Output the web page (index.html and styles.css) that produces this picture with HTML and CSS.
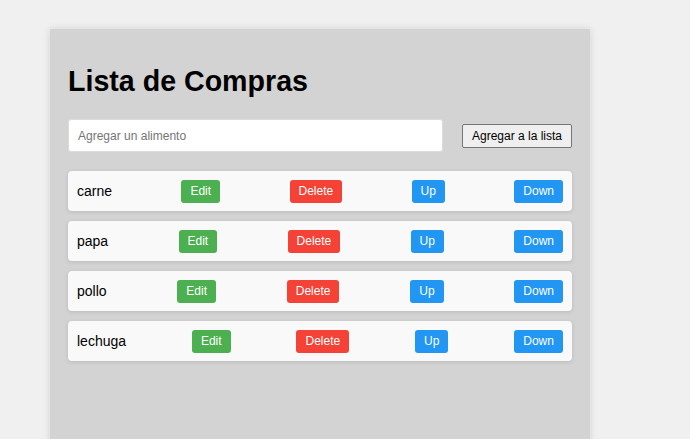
FILE: index.html
```html
<!DOCTYPE html>
<html lang="es">
<head>
<meta charset="utf-8">
<title>Lista de Compras</title>
<link rel="stylesheet" href="styles.css">
</head>
<body>
<div class="container">
  <h1 class="title">Lista de Compras</h1>
  <div class="add-row">
    <input class="add-input" type="text" placeholder="Agregar un alimento">
    <button class="add-btn">Agregar a la lista</button>
  </div>
  <ul class="list">
    <li class="item"><span class="name">carne</span><button class="btn edit">Edit</button><button class="btn delete">Delete</button><button class="btn move">Up</button><button class="btn move">Down</button></li>
    <li class="item"><span class="name">papa</span><button class="btn edit">Edit</button><button class="btn delete">Delete</button><button class="btn move">Up</button><button class="btn move">Down</button></li>
    <li class="item"><span class="name">pollo</span><button class="btn edit">Edit</button><button class="btn delete">Delete</button><button class="btn move">Up</button><button class="btn move">Down</button></li>
    <li class="item"><span class="name">lechuga</span><button class="btn edit">Edit</button><button class="btn delete">Delete</button><button class="btn move">Up</button><button class="btn move">Down</button></li>
  </ul>
</div>
</body>
</html>
```

FILE: styles.css
```css
html, body {
  margin: 0;
  padding: 0;
  background: #f0f0f0;
  font-family: "Liberation Sans", Arial, sans-serif;
  overflow: hidden;
}
body {
  padding: 29px 0 0 50px;
}
.container {
  width: 540px;
  box-sizing: border-box;
  min-height: 480px;
  background: #d3d3d3;
  padding: 35px 18px 18px 18px;
  box-shadow: 0 0 8px rgba(0, 0, 0, 0.12);
}
.title {
  margin: 0;
  font-size: 28.6px;
  line-height: 34px;
  font-weight: bold;
  color: #000;
}
.add-row {
  display: flex;
  align-items: center;
  gap: 19px;
  margin-top: 21px;
}
.add-input {
  flex: 1;
  height: 33px;
  box-sizing: border-box;
  border: 1px solid #dcdcdc;
  border-radius: 3px;
  padding: 0 9px;
  font-family: "Liberation Sans", Arial, sans-serif;
  font-size: 12px;
  background: #fff;
  outline: none;
}
.add-input::placeholder {
  color: #757575;
}
.add-btn {
  width: 110px;
  height: 24px;
  box-sizing: border-box;
  padding: 0;
  border: 1px solid #767676;
  border-radius: 2px;
  background: #efefef;
  font-family: "Liberation Sans", Arial, sans-serif;
  font-size: 12px;
  color: #000;
}
.list {
  list-style: none;
  margin: 19px 0 0 0;
  padding: 0;
  display: flex;
  flex-direction: column;
  gap: 10px;
}
.item {
  display: flex;
  align-items: center;
  justify-content: space-between;
  height: 40px;
  box-sizing: border-box;
  padding: 0 9px;
  background: #f9f9f9;
  border-radius: 4px;
  box-shadow: 0 1px 4px rgba(0, 0, 0, 0.12);
}
.name {
  font-size: 14px;
  color: #000;
}
.btn {
  border: none;
  border-radius: 3px;
  padding: 4px 9px;
  font-family: "Liberation Sans", Arial, sans-serif;
  font-size: 12px;
  line-height: 15px;
  color: #fff;
}
.edit {
  background: #4caf50;
}
.delete {
  background: #f44336;
}
.move {
  background: #2196f3;
}
```
